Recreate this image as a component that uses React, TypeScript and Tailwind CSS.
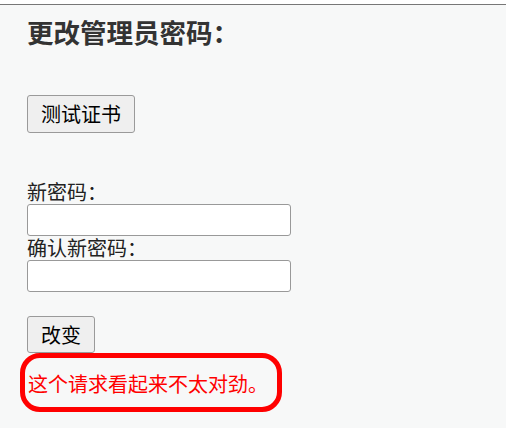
const cjk = { fontFamily: '"Noto Sans CJK SC", "Liberation Sans", sans-serif' };

export default function App() {
  return (
    <div className="w-[506px] h-[428px] bg-white overflow-hidden" style={cjk}>
      <div className="h-[4px] bg-white" />
      <div className="h-[424px] border-t border-[#777] bg-[#f7f8f8] pl-[27px]">
        <h2 className="mt-[9px] text-[26.5px] leading-[36px] font-bold text-[#333]">更改管理员密码：</h2>

        <button className="mt-[45px] h-[38px] px-[13px] text-[20px] leading-none text-black bg-[#efefef] border border-[#9a9a9a] rounded-[3px]">
          测试证书
        </button>

        <form className="mt-[47px] flex flex-col">
          <label className="text-[20px] leading-[24px] text-[#222]">新密码：</label>
          <input type="password" className="w-[264px] h-[32px] bg-white border border-[#999] rounded-[3px]" />
          <label className="text-[20px] leading-[24px] text-[#222]">确认新密码：</label>
          <input type="password" className="w-[264px] h-[32px] bg-white border border-[#999] rounded-[3px]" />
          <div>
            <button type="button" className="mt-[24px] h-[37px] px-[13px] text-[20px] leading-none text-black bg-[#efefef] border border-[#9a9a9a] rounded-[3px]">
              改变
            </button>
          </div>
        </form>

        <div className="-ml-[7px] w-[262px] h-[59px] border-[5px] border-[#ff0000] rounded-[20px] pl-[3px] pt-[2px] flex items-center">
          <p className="text-[20px] leading-[24px] text-[#ff0000] whitespace-nowrap">这个请求看起来不太对劲。</p>
        </div>
      </div>
    </div>
  );
}
